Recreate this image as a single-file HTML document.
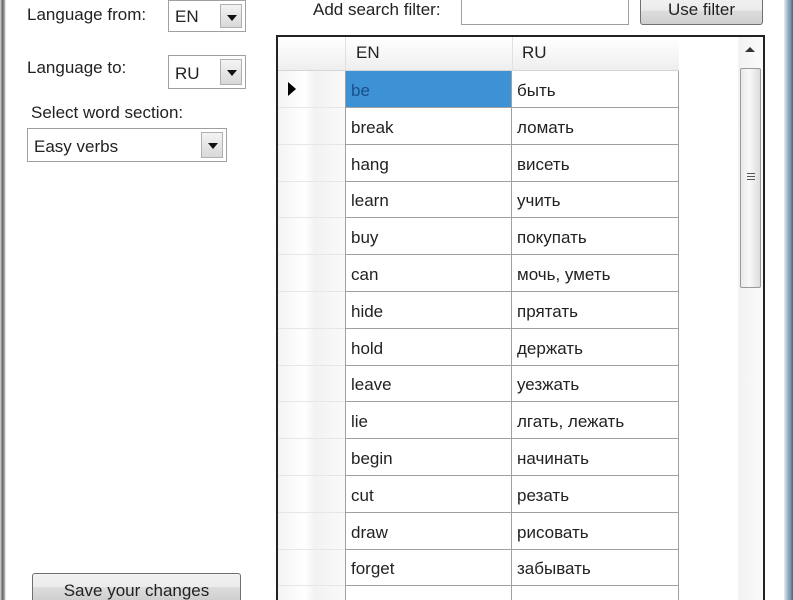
<!DOCTYPE html>
<html><head><meta charset="utf-8"><style>
*{margin:0;padding:0;box-sizing:border-box}
html,body{width:793px;height:600px;overflow:hidden}
body{background:#fff;position:relative;font-family:"Liberation Sans",sans-serif;font-size:17px;color:#222}
.a{position:absolute}
.combo{position:absolute;border:1px solid #a0a0a0;background:#fff;}
.combo span{position:absolute;left:6px;top:6px}
.dd{position:absolute;right:3px;top:3px;width:22px;bottom:3px;border:1px solid #b0b0b0;background:linear-gradient(#f4f4f4,#d8d8d8)}
.dd:after{content:"";position:absolute;left:6px;top:10px;border-left:5px solid transparent;border-right:5px solid transparent;border-top:6px solid #111}
.btn{position:absolute;border:1px solid #707070;border-radius:3px;background:linear-gradient(#f2f2f2 0%,#ebebeb 50%,#dddddd 51%,#cfcfcf 100%);text-align:center;overflow:hidden}
.row{position:absolute;left:0;width:401px;height:37px}
.rh{position:absolute;left:0;width:67px;height:37px;border-bottom:1px solid #e6e6e6}
.c{position:absolute;top:0;height:37px;border-right:1px solid #a0a0a0;border-bottom:1px solid #a0a0a0;padding:10px 0 0 5px}
.c1{left:67px;width:167px;border-left:1px solid #a0a0a0}
.c2{left:234px;width:167px}
</style></head><body>
<div class="a" style="left:0;top:0;width:6px;height:600px;background:linear-gradient(90deg,#ddd,#666 40%,#999 70%,#fff)"></div>
<div class="a" style="left:784px;top:0;width:9px;height:600px;background:linear-gradient(90deg,#e6eef4,#9fb4c6 40%,#7f98ad 70%,#466479)"></div>

<div class="a" style="left:27px;top:5px">Language from:</div>
<div class="combo" style="left:168px;top:0;width:78px;height:32px"><span>EN</span><div class="dd"></div></div>
<div class="a" style="left:27px;top:58px">Language to:</div>
<div class="combo" style="left:168px;top:55px;width:78px;height:34px"><span style="top:8px">RU</span><div class="dd"></div></div>
<div class="a" style="left:31px;top:103px">Select word section:</div>
<div class="combo" style="left:27px;top:128px;width:200px;height:34px"><span style="top:8px">Easy verbs</span><div class="dd"></div></div>
<div class="btn" style="left:32px;top:573px;width:209px;height:27px;padding-top:7px;border-bottom:none;border-radius:3px 3px 0 0">Save your changes</div>

<div class="a" style="left:313px;top:0">Add search filter:</div>
<div class="a" style="left:461px;top:-2px;width:168px;height:27px;border:1px solid #a0a0a0;background:#fff"></div>
<div class="btn" style="left:640px;top:-4px;width:123px;height:29px;padding-top:3px">Use filter</div>

<div class="a" style="left:276px;top:35px;width:489px;height:565px;border:2px solid #222;border-bottom:none;background:#fff;overflow:hidden">
 <div class="a" style="left:0;top:34px;width:67px;height:531px;background:linear-gradient(90deg,#f4f4f4,#fff 40%,#f2f2f2 55%,#fafafa)"></div>
 <div class="a" style="left:0;top:0;width:401px;height:34px;background:linear-gradient(#fff,#f7f7f7 50%,#eeeeee);border-bottom:1px solid #d5d5d5"></div>
 <div class="a" style="left:67px;top:0;width:1px;height:34px;background:#e0e0e0"></div>
 <div class="a" style="left:234px;top:0;width:1px;height:34px;background:#e0e0e0"></div>
 <div class="a" style="left:78px;top:6px">EN</div>
 <div class="a" style="left:244px;top:6px">RU</div>
 <div class="a" style="left:0;top:34px">
  <div class="row" style="top:0"><div class="rh"><div class="a" style="left:10px;top:11px;border-top:7px solid transparent;border-bottom:7px solid transparent;border-left:8px solid #000"></div></div><div class="c c1" style="background:#3d92d6;color:#1a4f8a">be</div><div class="c c2">быть</div></div>
  <div class="row" style="top:37px"><div class="rh"></div><div class="c c1">break</div><div class="c c2">ломать</div></div>
  <div class="row" style="top:74px"><div class="rh"></div><div class="c c1">hang</div><div class="c c2">висеть</div></div>
  <div class="row" style="top:110px"><div class="rh"></div><div class="c c1">learn</div><div class="c c2">учить</div></div>
  <div class="row" style="top:147px"><div class="rh"></div><div class="c c1">buy</div><div class="c c2">покупать</div></div>
  <div class="row" style="top:184px"><div class="rh"></div><div class="c c1">can</div><div class="c c2">мочь, уметь</div></div>
  <div class="row" style="top:221px"><div class="rh"></div><div class="c c1">hide</div><div class="c c2">прятать</div></div>
  <div class="row" style="top:258px"><div class="rh"></div><div class="c c1">hold</div><div class="c c2">держать</div></div>
  <div class="row" style="top:294px"><div class="rh"></div><div class="c c1">leave</div><div class="c c2">уезжать</div></div>
  <div class="row" style="top:331px"><div class="rh"></div><div class="c c1">lie</div><div class="c c2">лгать, лежать</div></div>
  <div class="row" style="top:368px"><div class="rh"></div><div class="c c1">begin</div><div class="c c2">начинать</div></div>
  <div class="row" style="top:405px"><div class="rh"></div><div class="c c1">cut</div><div class="c c2">резать</div></div>
  <div class="row" style="top:442px"><div class="rh"></div><div class="c c1">draw</div><div class="c c2">рисовать</div></div>
  <div class="row" style="top:478px"><div class="rh"></div><div class="c c1">forget</div><div class="c c2">забывать</div></div>
  <div class="a" style="left:67px;top:515px;width:167px;height:14px;border-left:1px solid #a0a0a0;border-right:1px solid #a0a0a0"></div>
  <div class="a" style="left:234px;top:515px;width:167px;height:14px;border-right:1px solid #a0a0a0"></div>
 </div>
 <div class="a" style="left:460px;top:0;width:25px;height:565px;background:linear-gradient(90deg,#f2f2f2,#fbfbfb)">
  <div class="a" style="left:7px;top:10px;border-left:5px solid transparent;border-right:5px solid transparent;border-bottom:5px solid #333"></div>
  <div class="a" style="left:2px;top:31px;width:21px;height:220px;border:1px solid #999;border-radius:2px;background:linear-gradient(90deg,#eaeaea,#f8f8f8 45%,#dcdcdc)">
   <div class="a" style="left:6px;top:104px;width:8px;height:1px;background:#555;box-shadow:0 3px 0 #555,0 6px 0 #555"></div>
  </div>
 </div>
</div>
</body></html>
